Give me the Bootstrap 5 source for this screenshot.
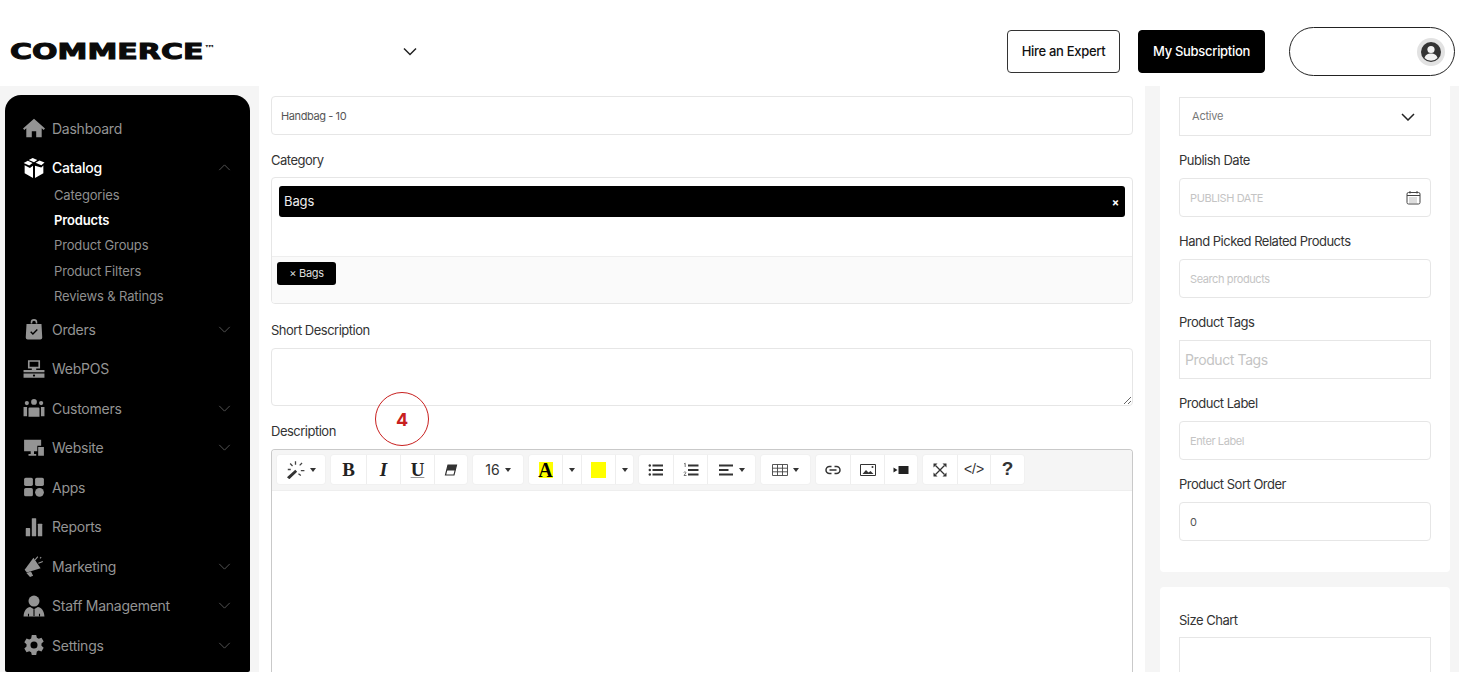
<!DOCTYPE html>
<html lang="en">
<head>
<meta charset="utf-8">
<title>Commerce</title>
<link href="https://cdn.jsdelivr.net/npm/bootstrap@5.3.0/dist/css/bootstrap.min.css" rel="stylesheet">
<style>
html,body{height:687px;overflow:hidden;background:#fff}
body{font-family:Inter,"Liberation Sans",sans-serif;font-size:13px;letter-spacing:-.25px;color:#333}
.top-bar{height:86px;padding:17px 8px 0 0}
.brand-logo{width:402px;padding-left:10px;overflow:visible}
.brand-word{display:inline-block;font-family:"DejaVu Sans",sans-serif;font-weight:700;font-size:21px;line-height:20px;letter-spacing:0;color:#0b0b0b;-webkit-text-stroke:1px #0b0b0b;transform:scaleX(1.43);transform-origin:left center}
.brand-word sup{font-size:8px;top:-.9em;-webkit-text-stroke:0;letter-spacing:0;vertical-align:baseline;position:relative}
.head-btn{height:43px;font-size:13px;font-weight:500;letter-spacing:-.3px;border-radius:4px;display:flex;align-items:center;justify-content:center;padding:0}
.hire-btn{width:113px;background:#fff;border:1px solid #333;color:#111;margin-right:18px}
.sub-btn{width:127px;background:#000;border:1px solid #000;color:#fff;margin-right:24px}
.user-pill{width:166px;height:49px;border:1px solid #222;border-radius:25px;padding-right:9px}
.shell{width:1459px;height:586px;background:#f5f5f5;overflow:hidden;align-items:flex-start}
.side-panel{width:245px;height:577px;margin:9px 9px 0 5px;background:#000;border-radius:16px 16px 2px 2px;padding-top:13.5px;flex:none;overflow:hidden}
.side-row{height:39.5px;display:flex;align-items:center;color:#949494;font-size:14px;letter-spacing:-.25px;padding-left:18px;padding-right:19px}
.side-row.on{color:#fff;font-weight:500}
.side-ico{width:22px;height:22px;margin-right:7px;flex:none;fill:currentColor}
.side-chev{width:13px;height:7px;margin-left:auto;fill:none;stroke:#5e5e5e;stroke-width:1}
.side-subs{margin:-5px 0 0;padding:0 0 0 49px;list-style:none}
.side-subs li{height:25.4px;line-height:25.4px;color:#8f8f8f;font-size:13px;letter-spacing:-.15px}
.side-subs li.on{color:#fff;font-weight:600}
.center-pane{width:886px;height:586px;background:#fff;padding:10px 12px 0;flex:none;overflow:hidden;position:relative}
.right-pane{width:290px;margin-left:15px;flex:none}
.right-sheet{background:#fff;border-radius:4px;padding:11px 19px 0}
.sheet-one{height:486px;border-radius:0 0 4px 4px}
.sheet-two{height:100px;margin-top:15px;padding-top:24px}
.fld-label{display:block;font-size:13px;line-height:18px;margin:0 0 8px;color:#333;letter-spacing:-.5px}
.fld-box{height:39px;border:1px solid #e6e6e6;border-radius:4px;font-size:11px;padding:0 10px;color:#555;letter-spacing:-.4px;box-shadow:none}
.fld-box::placeholder{color:#c4c4c4}
.fld-first{padding-left:9px}
.fld-gap{margin-bottom:16px}
.right-sheet .fld-label{margin-bottom:9px}
.right-sheet .fld-gap{margin-bottom:15px}
.sheet-two .fld-label{margin-bottom:8px}
.fld-square{border-radius:0}
.tags-ph{font-size:14px;padding-left:5px}
.fld-select{height:39px;border:1px solid #e6e6e6;border-radius:0;font-size:11px;padding:0 12px;color:#777;letter-spacing:-.2px;background-image:url("data:image/svg+xml,%3Csvg xmlns='http://www.w3.org/2000/svg' viewBox='0 0 14 8'%3E%3Cpath d='M1 1l6 6 6-6' fill='none' stroke='%23222' stroke-width='1.5'/%3E%3C/svg%3E");background-size:14px 8px;background-position:right 15px center}
.date-wrap{position:relative}
.date-ico{position:absolute;right:10px;top:12px;width:15px;height:15px}
.cat-box{height:127px;border:1px solid #e6e6e6;border-radius:4px;overflow:hidden;display:flex;flex-direction:column;margin-bottom:17px}
.cat-top{height:78px;padding:8px 7px 0 7px;flex:none}
.cat-pick{height:31px;background:#000;color:#eee;border-radius:3px;font-size:13px;padding:1px 5px 0;display:flex;align-items:center;justify-content:space-between;letter-spacing:-.1px}
.cat-pick b{font-size:11px;color:#fff;padding-right:1px}
.cat-bottom{flex:1;background:#fafafa;border-top:1px solid #eee;padding:5px 5px}
.cat-chip{display:inline-flex;align-items:center;justify-content:center;width:59px;height:23px;background:#000;color:#ddd;border-radius:3px;font-size:11px;letter-spacing:-.3px}
.short-label{margin-bottom:9px}
.short-area{height:58px;border:1px solid #e6e6e6;border-radius:4px;margin-bottom:16px;box-shadow:none}
.desc-label{margin-bottom:9px}
.editor-wrap{height:230px;border:1px solid #c9c9c9;border-bottom:0;border-radius:4px 4px 0 0;overflow:hidden}
.editor-tools{height:41px;background:#f5f5f5;border-bottom:1px solid #eee;padding:5px 0 0 5px;gap:6px}
.tool-group{height:29px;background:#fff;border-radius:3px;box-shadow:0 0 0 1px #f1f1f1;display:flex}
.tool-item{height:29px;display:flex;align-items:center;justify-content:center;border-left:1px solid #eee;color:#333;font-size:14px;letter-spacing:0;flex:none;gap:5px}
.tool-item:first-child{border-left:0}
.w35{width:35px}.w34{width:34px}.w33{width:33px}.w19{width:19px}.w18{width:18px}.w48{width:48px}.w49{width:49px}.w50{width:50px}
.tool-caret{width:0;height:0;border-left:3.5px solid transparent;border-right:3.5px solid transparent;border-top:4px solid #333;flex:none}
.tool-ico{width:16px;height:16px;flex:none}
.wand-ico{width:19px;height:19px;flex:none}
.serif-b{font-family:"Liberation Serif",serif;font-weight:700;font-size:19px;line-height:19px;color:#222}
.serif-u{text-decoration:underline;text-underline-offset:1px;text-decoration-color:#999}
.hl-a{background:#ff0;width:14px;height:16px;display:flex;align-items:center;justify-content:center;color:#000;font-family:"Liberation Serif",serif;font-weight:700;font-size:20px;line-height:16px}
.hl-y{background:#ff0;width:15px;height:16px}
.q-mark{font-family:"Liberation Sans",sans-serif;font-weight:700;font-size:19px;color:#333}
.code-mark{font-family:"Liberation Sans",sans-serif;font-size:14px}
.step-note{position:absolute;left:116px;top:306px;width:54px;height:54px;border:1.5px solid #c8201f;border-radius:50%;background:transparent;color:#c8201f;font-weight:700;font-size:18px;display:flex;align-items:center;justify-content:center;letter-spacing:0}
</style>
</head>
<body>
<header class="top-bar d-flex align-items-center">
  <div class="brand-logo d-flex align-items-center"><span class="brand-word">COMMERCE<sup>™</sup></span></div>
  <svg width="16" height="10" viewBox="0 0 16 10"><path d="M2 1.500l6 6 6-6" fill="none" stroke="#222" stroke-width="1.500"/></svg>
  <div class="ms-auto d-flex align-items-center">
    <a class="btn head-btn hire-btn" href="#">Hire an Expert</a>
    <a class="btn head-btn sub-btn" href="#">My Subscription</a>
    <div class="user-pill d-flex align-items-center justify-content-end">
      <svg width="28" height="28" viewBox="0 0 28 28"><circle cx="14" cy="14" r="14" fill="#e2e2e2"/><circle cx="14" cy="14" r="10" fill="#333"/><circle cx="14" cy="11.500" r="3.600" fill="#f2f2f2"/><path d="M7.500 20c1-3.600 3.600-4.600 6.500-4.600s5.500 1 6.500 4.600a9 9 0 0 1-13 0z" fill="#f2f2f2"/></svg>
    </div>
  </div>
</header>

<div class="shell d-flex">
  <nav class="side-panel">
    <div class="side-row"><svg class="side-ico" viewBox="0 0 20 20"><path d="M10 1.500L0 10.500l1.200 1.300L3 10.300V18.500h5v-5.500h4v5.500h5V10.300l1.800 1.500L20 10.500z"/></svg>Dashboard</div>
    <div class="side-row on"><svg class="side-ico" viewBox="0 0 20 20"><path d="M10 4.800L5.200 2.700 8.800.800 13 2.700zM15 3.200l4.600 1.800-2.900 2.500-5.300-2.300zM4.400 3.500l4.300 2-3 2.200L.6 5.400zM1.500 7.500v7.300l7.600 4.200v-11l-2.800 2zM10.900 8v11l7.600-4.200V7.800l-1.900 1.700z"/></svg>Catalog<svg class="side-chev" viewBox="0 0 14 8"><path d="M1 7l6-6 6 6"/></svg></div>
    <ul class="side-subs">
      <li>Categories</li>
      <li class="on">Products</li>
      <li>Product Groups</li>
      <li>Product Filters</li>
      <li>Reviews &amp; Ratings</li>
    </ul>
    <div class="side-row"><svg class="side-ico" viewBox="0 0 20 20"><path d="M7 5V4a3 3 0 0 1 6 0v1h-1.400V4a1.600 1.600 0 0 0-3.200 0v1zM3.200 5.500h13.600l.7 12.200a1.800 1.800 0 0 1-1.800 1.800H4.300a1.800 1.800 0 0 1-1.800-1.800z"/><path d="M7 12.500l2 2 4-4" fill="none" stroke="#000" stroke-width="1.300"/></svg>Orders<svg class="side-chev" viewBox="0 0 14 8"><path d="M1 1l6 6 6-6"/></svg></div>
    <div class="side-row"><svg class="side-ico" viewBox="0 0 20 20"><path d="M4.500 2h11v7.500h-11zM6 3.500V8h8V3.500zM0.500 11h19v2h-19zM0.500 14h19v4h-19zM8 9.500h4V11H8z" fill-rule="evenodd"/><circle cx="10" cy="16" r="1" fill="#000"/></svg>WebPOS</div>
    <div class="side-row"><svg class="side-ico" viewBox="0 0 20 20"><circle cx="10" cy="4.500" r="2.600"/><circle cx="3.500" cy="5.500" r="1.900"/><circle cx="16.500" cy="5.500" r="1.900"/><path d="M6 9.500h8a1 1 0 0 1 1 1V18H5v-7.500a1 1 0 0 1 1-1zM.5 9h3.200v8.500H.5zM16.300 9h3.200v8.500h-3.200z"/></svg>Customers<svg class="side-chev" viewBox="0 0 14 8"><path d="M1 1l6 6 6-6"/></svg></div>
    <div class="side-row"><svg class="side-ico" viewBox="0 0 20 20"><path d="M1 2.500h15.500V8h-3.500v5H1zM7 13h3v2.500h2V17H5v-1.500h2zM13.800 9h5.200v8h-5.200z"/></svg>Website<svg class="side-chev" viewBox="0 0 14 8"><path d="M1 1l6 6 6-6"/></svg></div>
    <div class="side-row"><svg class="side-ico" viewBox="0 0 20 20"><rect x="1" y="1.500" width="8" height="7.500" rx="1.500"/><rect x="11" y="1.500" width="8" height="7.500" rx="1.500"/><rect x="1" y="11" width="8" height="7.500" rx="1.500"/><circle cx="15" cy="14.800" r="4"/></svg>Apps</div>
    <div class="side-row"><svg class="side-ico" viewBox="0 0 20 20"><rect x="2.500" y="11" width="4" height="7.500" rx=".5"/><rect x="8" y="2" width="4" height="16.500" rx=".5"/><rect x="13.500" y="7" width="4" height="11.500" rx=".5"/></svg>Reports</div>
    <div class="side-row"><svg class="side-ico" viewBox="0 0 20 20"><path d="M9.500 2.500L16 12 3.500 16 1.500 13.500z"/><path d="M4 16.500l3-1 1.500 3-2 .8zM11 4.500l2.500-3M14 7.500l4-1.500M15.500 3l1-1" stroke="currentColor" stroke-width="1"/></svg>Marketing<svg class="side-chev" viewBox="0 0 14 8"><path d="M1 1l6 6 6-6"/></svg></div>
    <div class="side-row"><svg class="side-ico" viewBox="0 0 20 20"><circle cx="10" cy="5.500" r="5"/><path d="M6.500 11l3.500 2 3.500-2c3 .5 5.500 2.500 6 8.500H.5c.5-6 3-8 6-8.500z"/><path d="M10 13v6M5 17v2.500M15 17v2.500" stroke="#000" stroke-width="1"/></svg>Staff Management<svg class="side-chev" viewBox="0 0 14 8"><path d="M1 1l6 6 6-6"/></svg></div>
    <div class="side-row"><svg class="side-ico" viewBox="0 0 20 20"><path fill-rule="evenodd" d="M8 .8h4l.6 2.600 1.700.9 2.500-.9 2 3.400-2 1.800v2l2 1.800-2 3.400-2.500-.9-1.700.9L12 19.200H8l-.6-2.600-1.700-.9-2.500.9-2-3.400 2-1.800v-2l-2-1.800 2-3.400 2.500.9 1.700-.9zM10 6.800a3.200 3.200 0 1 0 0 6.400 3.200 3.200 0 0 0 0-6.400z"/></svg>Settings<svg class="side-chev" viewBox="0 0 14 8"><path d="M1 1l6 6 6-6"/></svg></div>
  </nav>

  <main class="center-pane">
    <input class="form-control fld-box fld-first fld-gap" type="text" value="Handbag - 10">
    <label class="fld-label">Category</label>
    <div class="cat-box">
      <div class="cat-top"><div class="cat-pick"><span>Bags</span><b>×</b></div></div>
      <div class="cat-bottom"><span class="cat-chip">× Bags</span></div>
    </div>
    <label class="fld-label short-label">Short Description</label>
    <textarea class="form-control short-area"></textarea>
    <label class="fld-label desc-label">Description</label>
    <div class="editor-wrap">
      <div class="editor-tools d-flex">
        <div class="tool-group"><div class="tool-item w48"><svg class="wand-ico" viewBox="0 0 16 16"><path d="M.8 14.500l7-6.300 1.600 1.600-6.600 6.400z" fill="#333"/><path d="M8 1v3M3.500 3l2 2M13.500 2.500l-2 2M15.500 9h-3M12.500 13l-2-1.500M4 8H1.500" stroke="#444" stroke-width="1.100"/></svg><span class="tool-caret"></span></div></div>
        <div class="tool-group">
          <div class="tool-item w35"><span class="serif-b">B</span></div>
          <div class="tool-item w34"><span class="serif-b fst-italic">I</span></div>
          <div class="tool-item w34"><span class="serif-b serif-u">U</span></div>
          <div class="tool-item w33"><svg class="tool-ico" viewBox="0 0 16 16"><path d="M5 3h8.500l-2.500 10H2.500z" fill="none" stroke="#333" stroke-width="1.200"/><path d="M5 3h8.500l-1.300 5.500H3.700z" fill="#333"/></svg></div>
        </div>
        <div class="tool-group"><div class="tool-item w50">16<span class="tool-caret"></span></div></div>
        <div class="tool-group">
          <div class="tool-item w33"><span class="hl-a">A</span></div>
          <div class="tool-item w19"><span class="tool-caret"></span></div>
          <div class="tool-item w34"><span class="hl-y"></span></div>
          <div class="tool-item w18"><span class="tool-caret"></span></div>
        </div>
        <div class="tool-group">
          <div class="tool-item w34"><svg class="tool-ico" viewBox="0 0 16 16"><path d="M4.500 3.500H15M4.500 8H15M4.500 12.500H15" stroke="#333" stroke-width="1.800"/><circle cx="1.800" cy="3.500" r="1.200" fill="#333"/><circle cx="1.800" cy="8" r="1.200" fill="#333"/><circle cx="1.800" cy="12.500" r="1.200" fill="#333"/></svg></div>
          <div class="tool-item w34"><svg class="tool-ico" viewBox="0 0 16 16"><path d="M5 3.500H15.500M5 8H15.500M5 12.500H15.500" stroke="#333" stroke-width="1.800"/><path d="M1 2l1.200-.8V5M.8 10.500c.5-1 2.400-.8 2 .4L1 13.500h2.500" fill="none" stroke="#555" stroke-width=".8"/></svg></div>
          <div class="tool-item w48"><svg class="tool-ico" viewBox="0 0 16 16"><path d="M1 3.500h14M1 8h9.500M1 12.500h14" stroke="#333" stroke-width="1.800"/></svg><span class="tool-caret"></span></div>
        </div>
        <div class="tool-group"><div class="tool-item w49"><svg class="tool-ico" viewBox="0 0 16 16"><path d="M.5 2.500h15v11H.5zM.5 6.200h15M.5 9.800h15M5.500 2.500v11M10.500 2.500v11" fill="none" stroke="#444" stroke-width=".9"/></svg><span class="tool-caret"></span></div></div>
        <div class="tool-group">
          <div class="tool-item w34"><svg class="tool-ico" viewBox="0 0 16 16"><path d="M6.500 4.500H4.500a3.500 3.500 0 0 0 0 7h2M9.500 4.500h2a3.500 3.500 0 0 1 0 7h-2M4.500 8h7" fill="none" stroke="#333" stroke-width="1.500"/></svg></div>
          <div class="tool-item w34"><svg class="tool-ico" viewBox="0 0 16 16"><path d="M.5 2.500h15v11H.5z" fill="none" stroke="#333" stroke-width="1"/><path d="M2.500 12l3.500-4 2.500 2.500 2-1.500 3 3z" fill="#333"/><circle cx="12.500" cy="5" r="1" fill="#333"/></svg></div>
          <div class="tool-item w33"><svg class="tool-ico" viewBox="0 0 16 16"><rect x="5.500" y="4" width="10" height="8" fill="#222"/><path d="M4.500 8L.5 5.500v5z" fill="#222"/></svg></div>
        </div>
        <div class="tool-group">
          <div class="tool-item w34"><svg class="tool-ico" viewBox="0 0 16 16"><path d="M3.500 3.500l9 9M12.500 3.500l-9 9" stroke="#333" stroke-width="1.300"/><path d="M1.500 1.500h4l-4 4zM14.500 1.500v4l-4-4zM1.500 14.500v-4l4 4zM14.500 14.500h-4l4-4z" fill="#333"/></svg></div>
          <div class="tool-item w33"><span class="code-mark">&lt;/&gt;</span></div>
          <div class="tool-item w34"><span class="q-mark">?</span></div>
        </div>
      </div>
    </div>
    <div class="step-note">4</div>
  </main>

  <aside class="right-pane">
    <div class="right-sheet sheet-one">
      <select class="form-select fld-select fld-gap"><option>Active</option></select>
      <label class="fld-label">Publish Date</label>
      <div class="date-wrap fld-gap">
        <input class="form-control fld-box" type="text" placeholder="PUBLISH DATE">
        <svg class="date-ico" viewBox="0 0 15 15"><rect x="1" y="2.500" width="13" height="11.500" rx="1.500" fill="none" stroke="#444"/><path d="M1 5.500h13M4 1v2.500M11 1v2.500" stroke="#444"/><path d="M3.500 8h8M3.500 10h8M3.500 12h8" stroke="#777" stroke-dasharray="1 1"/></svg>
      </div>
      <label class="fld-label">Hand Picked Related Products</label>
      <input class="form-control fld-box fld-gap" type="text" placeholder="Search products">
      <label class="fld-label">Product Tags</label>
      <input class="form-control fld-box fld-square tags-ph fld-gap" type="text" placeholder="Product Tags">
      <label class="fld-label">Product Label</label>
      <input class="form-control fld-box fld-gap" type="text" placeholder="Enter Label">
      <label class="fld-label">Product Sort Order</label>
      <input class="form-control fld-box fld-gap" type="text" value="0">
    </div>
    <div class="right-sheet sheet-two">
      <label class="fld-label">Size Chart</label>
      <div class="fld-box fld-square"></div>
    </div>
  </aside>
</div>
<script src="https://cdn.jsdelivr.net/npm/bootstrap@5.3.0/dist/js/bootstrap.bundle.min.js"></script>
</body>
</html>
